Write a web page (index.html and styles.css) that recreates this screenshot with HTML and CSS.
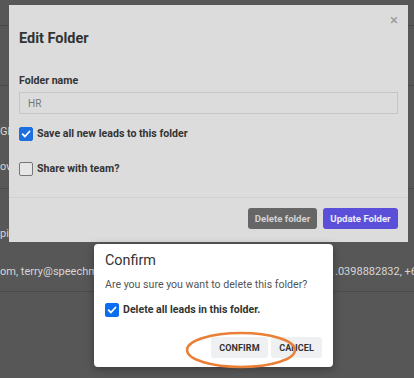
FILE: index.html
```html
<!DOCTYPE html>
<html lang="en">

<head>
  <meta charset="UTF-8">
  <meta name="viewport" content="width=device-width, initial-scale=1.0">
  <title>Edit Folder</title>
  <link rel="stylesheet" href="styles.css">
</head>

<body>
  <!-- Page behind the dialogs -->
  <div class="page">
    <div class="row row-top"></div>
    <div class="row row-head"></div>
    <div class="row row-mid">
      <div class="cell cell-a">Gl</div>
      <div class="cell cell-b">ow</div>
    </div>
    <div class="row row-lead">
      <div class="cell cell-c">pi</div>
      <div class="cell cell-d">
        <span class="lead-mail">om, terry@speechm</span>
        <span>.0398882832, +6</span>
      </div>
    </div>
  </div>

  <!-- Edit folder modal (dimmed) -->
  <div class="edit-modal">
    <span class="edit-close">&times;</span>
    <h2 class="edit-title">Edit Folder</h2>
    <div class="edit-body">
      <label class="field-label" for="folderName">Folder name</label>
      <input class="field-input" id="folderName" type="text" value="HR">
      <label class="check-row check-save">
        <span class="check-box checked">
          <svg viewBox="0 0 12 12" width="12" height="12"><path d="M2.6 6.2l2.3 2.3 4.6-5" fill="none" stroke="#fff" stroke-width="1.8" stroke-linecap="round" stroke-linejoin="round"/></svg>
        </span>
        Save all new leads to this folder
      </label>
      <label class="check-row check-share">
        <span class="check-box"></span>
        Share with team?
      </label>
    </div>
    <div class="edit-footer">
      <button class="btn btn-delete">Delete folder</button>
      <button class="btn btn-update">Update Folder</button>
    </div>
  </div>

  <!-- Confirm dialog -->
  <div class="confirm">
    <div class="confirm-title">Confirm</div>
    <div class="confirm-text">Are you sure you want to delete this folder?</div>
    <label class="check-row confirm-check">
      <span class="check-box checked bright">
        <svg viewBox="0 0 12 12" width="12" height="12"><path d="M2.6 6.2l2.3 2.3 4.6-5" fill="none" stroke="#fff" stroke-width="1.8" stroke-linecap="round" stroke-linejoin="round"/></svg>
      </span>
      Delete all leads in this folder.
    </label>
    <div class="confirm-actions">
      <button class="flat-btn">Confirm</button>
      <button class="flat-btn">Cancel</button>
    </div>
  </div>

  <!-- annotation ring -->
  <svg class="ring" width="414" height="378" viewBox="0 0 414 378">
    <ellipse cx="241" cy="350" rx="54" ry="17" fill="none" stroke="#ea8038" stroke-width="2.5"/>
  </svg>
</body>

</html>
```

FILE: styles.css
```css
body {
  margin: 0;
  padding: 0;
  width: 414px;
  height: 378px;
  overflow: hidden;
  background-color: #575757;
  font-family: 'Roboto', 'Liberation Sans', sans-serif;
  position: relative;
}

/* Siden bak dialogene */
.page {
  display: flex;
  flex-direction: column;
  color: #d6d6d6;
  font-size: 11px;
}

.row {
  border-bottom: 1px solid #4a4a4a;
  box-sizing: border-box;
  overflow: hidden;
}

.row-top {
  height: 26px;
}

.row-head {
  height: 60px;
}

.row-mid {
  height: 103px;
  display: flex;
  flex-direction: column;
}

.row-lead {
  height: 103px;
  display: flex;
  flex-direction: column;
}

.cell {
  line-height: 14px;
  white-space: nowrap;
}

.cell-a {
  margin-top: 39px;
}

.cell-b {
  margin-top: 21px;
}

.cell-c {
  margin-top: 38px;
}

.cell-d {
  margin-top: 24px;
  display: flex;
}

.lead-mail {
  width: 335px;
  flex-shrink: 0;
}

/* Edit Folder modal */
.edit-modal {
  position: absolute;
  left: 9px;
  top: 5px;
  width: 399px;
  height: 237px;
  background-color: #dcdcdc;
  box-sizing: border-box;
  color: #333;
}

.edit-close {
  position: absolute;
  right: 10px;
  top: 8px;
  font-size: 15px;
  color: #9a9a9a;
  line-height: 15px;
}

.edit-title {
  margin: 0;
  padding: 24px 10px 0;
  font-size: 14.5px;
  font-weight: 700;
  line-height: 20px;
  color: #333;
}

.edit-body {
  display: flex;
  flex-direction: column;
  padding: 0 10px;
  height: 148px;
  box-sizing: border-box;
}

.field-label {
  margin-top: 25px;
  font-size: 10.6px;
  font-weight: 700;
  line-height: 14px;
}

.field-input {
  margin-top: 4px;
  height: 22px;
  box-sizing: border-box;
  border: 1px solid #c6c6ca;
  background: #dcdcdc;
  padding: 0 8px;
  font-family: inherit;
  font-size: 10px;
  color: #777;
  outline: none;
}

.check-row {
  display: flex;
  align-items: center;
  gap: 4px;
  font-size: 10.6px;
  font-weight: 700;
  line-height: 14px;
  color: #333;
  white-space: nowrap;
}

.check-save {
  margin-top: 13px;
}

.check-share {
  margin-top: 21px;
}

.check-box {
  width: 12px;
  height: 12px;
  border: 1px solid #777;
  border-radius: 2px;
  background: #e6e6e6;
  display: flex;
  align-items: center;
  justify-content: center;
  flex-shrink: 0;
}

.check-box.checked {
  background: #1d6fdf;
  border-color: #1d6fdf;
}

.check-box.bright {
  background: #0b6df0;
  border-color: #0b6df0;
}

.edit-footer {
  border-top: 1px solid #d0d0d0;
  display: flex;
  justify-content: flex-end;
  gap: 6px;
  padding: 10px 10px 0;
}

.btn {
  height: 21px;
  border: none;
  border-radius: 3px;
  padding: 0;
  font-family: inherit;
  font-size: 9.6px;
  font-weight: 700;
  white-space: nowrap;
}

.btn-delete {
  background-color: #666;
  color: #d2d2d2;
  width: 69px;
}

.btn-update {
  background-color: #5b4fd9;
  color: #ececfb;
  width: 75px;
}

/* Confirm dialog */
.confirm {
  position: absolute;
  left: 94px;
  top: 244px;
  width: 239px;
  height: 123px;
  background: #fff;
  border-radius: 4px;
  box-shadow: 0 2px 8px rgba(0, 0, 0, 0.35);
  box-sizing: border-box;
  padding: 7px 11px 0;
  display: flex;
  flex-direction: column;
}

.confirm-title {
  font-size: 14.4px;
  line-height: 20px;
  color: #333;
}

.confirm-text {
  margin-top: 6px;
  font-size: 10.6px;
  line-height: 16px;
  color: #555;
  white-space: nowrap;
}

.confirm-check {
  margin-top: 10px;
}

.confirm-actions {
  margin-top: 20px;
  display: flex;
  justify-content: flex-end;
  gap: 3px;
}

.flat-btn {
  height: 21px;
  border: none;
  border-radius: 3px;
  background: #eef0f1;
  color: #333;
  font-family: inherit;
  font-size: 9px;
  font-weight: 700;
  text-transform: uppercase;
  letter-spacing: 0.1px;
  padding: 0;
  white-space: nowrap;
}

.flat-btn:first-child {
  width: 57px;
}

.flat-btn:last-child {
  width: 51px;
}

/* Markering */
.ring {
  position: absolute;
  left: 0;
  top: 0;
  pointer-events: none;
}
```
